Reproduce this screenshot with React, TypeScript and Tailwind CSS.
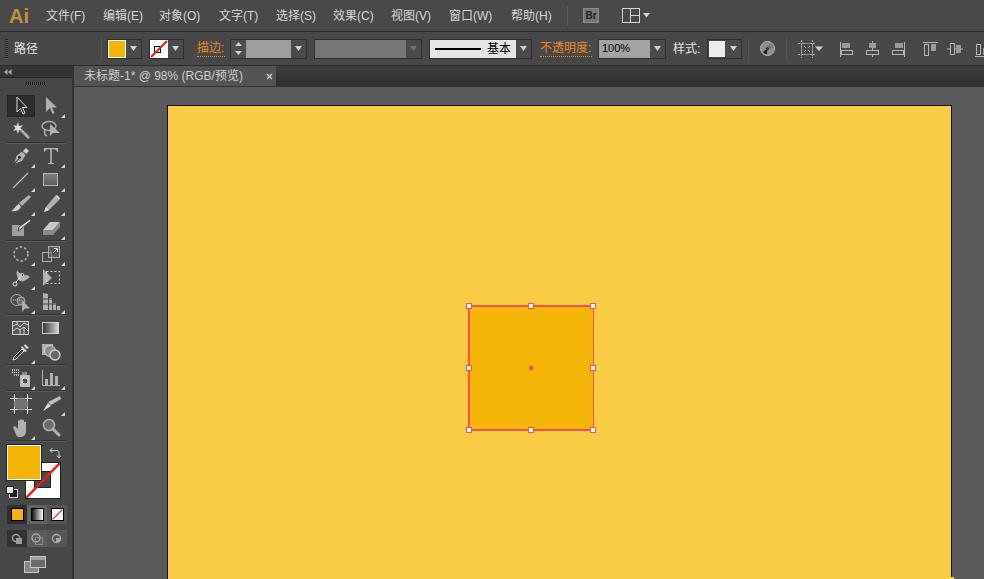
import React from "react";

const FONT = "font-['Liberation_Sans','Noto_Sans_CJK_SC',sans-serif]";

const menus = [
  ["文件(F)", "w-[57px]"],
  ["编辑(E)", "w-[56px]"],
  ["对象(O)", "w-[60px]"],
  ["文字(T)", "w-[57px]"],
  ["选择(S)", "w-[57px]"],
  ["效果(C)", "w-[58px]"],
  ["视图(V)", "w-[58px]"],
  ["窗口(W)", "w-[62px]"],
  ["帮助(H)", "w-[56px]"],
];

const Arrow = ({ dim = false }: { dim?: boolean }) => (
  <div className="w-[15px] h-full flex items-center justify-center bg-[#4a4a4a]">
    <svg width="7" height="5" viewBox="0 0 7 5">
      <path d="M0 0H7L3.5 5Z" fill={dim ? "#757575" : "#d0d0d0"} />
    </svg>
  </div>
);

const Box = ({ className = "", children }: { className?: string; children: React.ReactNode }) => (
  <div className={`h-[20px] flex border border-[#2e2e2e] bg-[#3c3c3c] ${className}`}>{children}</div>
);

const Sep = ({ className = "" }: { className?: string }) => <div className={`w-px h-[22px] bg-[#373737] border-r border-[#555] ${className}`} />;

const Label = ({ children, className = "" }: { children: React.ReactNode; className?: string }) => (
  <span className={`text-[12px] leading-[15px] whitespace-nowrap text-[#e8892b] border-b border-dotted border-[#e8892b] ${className}`}>{children}</span>
);

const NoneDiag = () => (
  <svg className="absolute inset-0 w-full h-full" viewBox="0 0 18 18" preserveAspectRatio="none">
    <line x1="1" y1="17" x2="17" y2="1" stroke="#ee1c25" strokeWidth="2" />
  </svg>
);

const AlignIcon = ({ children, className = "" }: { children: React.ReactNode; className?: string }) => (
  <svg width="16" height="16" viewBox="0 0 16 16" className={className} fill="none" stroke="#b5b5b5">
    {children}
  </svg>
);

const Tool = ({ children, corner = false, active = false }: { children: React.ReactNode; corner?: boolean; active?: boolean }) => (
  <div className={`relative flex items-center justify-center ${active ? "bg-[#2e2e2e] border border-[#262626] w-[28px] h-[22px] mx-px" : "w-[30px] h-[24px]"}`}>
    <svg width="22" height="22" viewBox="0 0 22 22">{children}</svg>
    {corner && (
      <svg className="absolute right-[1px] bottom-[0px]" width="4" height="4" viewBox="0 0 4 4">
        <path d="M4 0V4H0Z" fill="#d5d5d5" />
      </svg>
    )}
  </div>
);

const Row = ({ children }: { children: React.ReactNode }) => <div className="flex h-[24px] items-center pl-[6px]">{children}</div>;
const Divider = () => <div className="h-[2px] mx-[6px] bg-[#333] border-b border-[#5a5a5a]" />;

const G = "#b0b0b0";

export default function App() {
  return (
    <div className={`w-[984px] h-[579px] overflow-hidden flex flex-col bg-[#5a5a5a] ${FONT}`}>
      {/* Menu bar */}
      <div className="h-[32px] flex items-center bg-[#494949] border-b border-[#2b2b2b] shrink-0">
        <span className="w-[46px] pl-[9px] text-[#c4903f] text-[20px] font-bold leading-none font-['Liberation_Sans',sans-serif]">Ai</span>
        {menus.map(([t, w]) => (
          <span key={t} className={`${w} text-[12px] text-[#d6d6d6]`}>{t}</span>
        ))}
        <div className="w-px h-[20px] bg-[#333] border-r border-[#5d5d5d]" />
        <div className="ml-[15px] w-[16px] h-[15px] border border-[#8c8c8c] bg-[#767676] flex items-center justify-center text-[10px] font-bold text-[#222]">Br</div>
        <svg className="ml-[23px]" width="29" height="16" viewBox="0 0 29 16">
          <rect x="0.5" y="0.5" width="17" height="14" fill="#484848" stroke="#d5d5d5" />
          <path d="M8.5 1V14M9 7.5H17" stroke="#d5d5d5" fill="none" />
          <path d="M21 5H28L24.5 9.5Z" fill="#d5d5d5" />
        </svg>
      </div>

      {/* Control bar */}
      <div className="h-[34px] flex items-center bg-[#484848] border-b border-[#2b2b2b] shrink-0 [&>*]:shrink-0">
        <div className="ml-[5px] w-[3px] h-[20px] bg-[repeating-linear-gradient(#1f1f1f_0,#1f1f1f_1px,#5a5a5a_1px,#5a5a5a_2px)]" />
        <span className="ml-[6px] w-[87px] text-[12px] text-[#e4e4e4]">路径</span>
        <Sep />
        <Box className="ml-[5px] w-[35px]">
          <div className="w-[18px] h-full bg-[#f5b508] border border-white" />
          <Arrow />
        </Box>
        <Box className="ml-[7px] w-[35px]">
          <div className="relative w-[18px] h-full bg-white">
            <div className="absolute left-[4px] top-[6px] w-[7px] h-[7px] border border-black" />
            <NoneDiag />
          </div>
          <Arrow />
        </Box>
        <Label className="ml-[13px] w-[28px]">描边:</Label>
        <Box className="ml-[5px] w-[77px]">
          <div className="w-[15px] h-full bg-[#4f4f4f] flex flex-col items-center justify-around">
            <svg width="7" height="4" viewBox="0 0 7 4"><path d="M0 4H7L3.5 0Z" fill="#d0d0d0" /></svg>
            <svg width="7" height="4" viewBox="0 0 7 4"><path d="M0 0H7L3.5 4Z" fill="#d0d0d0" /></svg>
          </div>
          <div className="flex-1 bg-[#9e9e9e]" />
          <Arrow />
        </Box>
        <Box className="ml-[7px] w-[108px]">
          <div className="flex-1 bg-[#767676]" />
          <Arrow dim />
        </Box>
        <Box className="ml-[7px] w-[103px]">
          <div className="flex-1 bg-[#e6e6e6] flex items-center pl-[5px]">
            <div className="w-[46px] h-[2px] bg-black" />
            <span className="ml-[6px] text-[12px] leading-none text-black">基本</span>
          </div>
          <Arrow />
        </Box>
        <Label className="ml-[8px] w-[52px]">不透明度:</Label>
        <Box className="ml-[6px] w-[68px]">
          <div className="flex-1 bg-[#a3a3a3] pl-[3px] text-[11px] leading-[17px] text-black">100%</div>
          <Arrow />
        </Box>
        <span className="ml-[7px] w-[34px] whitespace-nowrap text-[12px] text-[#e4e4e4]">样式:</span>
        <Box className="w-[35px]">
          <div className="w-[18px] h-full bg-[#ececec] border border-[#4a4a4a]" />
          <Arrow />
        </Box>
        <Sep className="ml-[6px]" />
        <svg className="ml-[11px]" width="15" height="15" viewBox="0 0 15 15">
          <circle cx="7.5" cy="7.5" r="7" fill="#8e8e8e" stroke="#b5b5b5" />
          <path d="M7.5 7.5 L3 11 A6 6 0 0 0 7 13.5Z" fill="#1c1c1c" />
          <path d="M7.5 7.5 L10 2 A6 6 0 0 1 13.5 7Z" fill="#787878" />
          <circle cx="7.5" cy="7.5" r="1.6" fill="#2a2a2a" />
        </svg>
        <Sep className="ml-[11px]" />
        <svg className="ml-[10px]" width="26" height="20" viewBox="0 0 26 20" fill="none" stroke="#a8a8a8">
          <rect x="4.5" y="4.5" width="11" height="11" stroke="#8c8c8c" />
          <path d="M1 4.5H8M13 4.5H19M1 15.5H8M13 15.5H19M4.5 1V8M15.5 1V8M4.5 12V19M15.5 12V19" strokeDasharray="2 1" />
          <path d="M7 7l2 2M13 7l-2 2M7 13l2-2M13 13l-2-2" />
          <path d="M18 7.5H26L22 12Z" fill="#d0d0d0" stroke="none" />
        </svg>
        <AlignIcon className="ml-[16px]">
          <path d="M1.5 1V16" />
          <rect x="3" y="2" width="8" height="5" fill="#9a9a9a" stroke="none" />
          <rect x="2.5" y="9.5" width="11" height="4" />
        </AlignIcon>
        <AlignIcon className="ml-[10px]">
          <path d="M7.5 0V3M7.5 7V9.5M7.5 14V16" />
          <rect x="4" y="2" width="7" height="5" fill="#9a9a9a" stroke="none" />
          <rect x="1.5" y="9.5" width="12" height="4" />
        </AlignIcon>
        <AlignIcon className="ml-[10px]">
          <path d="M13.5 1V16" />
          <rect x="4" y="2" width="8" height="5" fill="#9a9a9a" stroke="none" />
          <rect x="1.5" y="9.5" width="11" height="4" />
        </AlignIcon>
        <AlignIcon className="ml-[16px]">
          <path d="M0 1.5H15" />
          <rect x="1.5" y="3.5" width="4" height="11" />
          <rect x="8" y="3" width="5" height="7" fill="#9a9a9a" stroke="none" />
        </AlignIcon>
        <AlignIcon className="ml-[8px]">
          <path d="M0 8H16" />
          <rect x="3.5" y="2.5" width="4" height="11" fill="#484848" />
          <rect x="9" y="4" width="5" height="8" fill="#9a9a9a" stroke="none" />
        </AlignIcon>
        <AlignIcon className="ml-[12px]">
          <path d="M0 15.5H15" />
          <rect x="1.5" y="3.5" width="4" height="10" />
          <rect x="8" y="7" width="5" height="7" fill="#9a9a9a" stroke="none" />
        </AlignIcon>
      </div>

      <div className="flex-1 flex min-h-0">
        {/* Tools panel */}
        <div className="w-[74px] shrink-0 flex flex-col bg-[#474747] border-r-2 border-[#333]">
          <div className="h-[12px] bg-[#343434] border-b border-[#262626] flex items-center pl-[4px]">
            <svg width="8" height="6" viewBox="0 0 8 6"><path d="M3.5 0V6L0 3ZM7.5 0V6L4 3Z" fill="#a8a8a8" /></svg>
          </div>
          <div className="h-[16px] flex items-start justify-center pt-[4px]">
            <div className="w-[20px] h-[3px] bg-[repeating-linear-gradient(90deg,#151515_0,#151515_1px,#5a5a5a_1px,#5a5a5a_2px)]" />
          </div>
          <div>
            <Row>
              <Tool active>
                <path d="M7 2V17L10.5 13.5L13 19L15 18L12.5 12.5H17Z" fill="#2e2e2e" stroke="#d8d8d8" />
              </Tool>
              <Tool corner>
                <path d="M6 2V17L10 13L12.5 19L14.5 18L12 12.5H17Z" fill={G} />
              </Tool>
            </Row>
            <Row>
              <Tool>
                <path d="M8 3L9 7L13 6L10.5 9L13 12L9 11L8 15L6.5 11L3 12L5.5 9L3 6L6.5 7Z" fill="#dcdcdc" />
                <path d="M11 11L19 19" stroke={G} strokeWidth="2.5" />
              </Tool>
              <Tool>
                <ellipse cx="9" cy="7" rx="7" ry="4.5" fill="none" stroke={G} strokeWidth="1.4" />
                <path d="M5 11C4 14 5 16 7 17" fill="none" stroke={G} strokeWidth="1.4" />
                <path d="M10 5V17L13 14H20Z" fill={G} />
              </Tool>
            </Row>
            <Divider />
            <Row>
              <Tool corner>
                <path d="M16 3L19 6L16 9L13 6Z" fill="#cfcfcf" />
                <path d="M12 6.5L15.5 10L12 16L4 19L6.5 11Z" fill={G} />
                <circle cx="9.5" cy="12.5" r="1.4" fill="#222" />
                <path d="M4 19L9 13.5" stroke="#222" />
              </Tool>
              <Tool corner>
                <path d="M4 3H18V7H17.3C16.8 5 15.5 4.2 14 4.2H11.8V17C11.8 17.8 12.5 18.2 14 18.2V19H8V18.2C9.5 18.2 10.2 17.8 10.2 17V4.2H8C6.5 4.2 5.2 5 4.7 7H4Z" fill="#b5b5b5" />
              </Tool>
            </Row>
            <Row>
              <Tool corner>
                <path d="M3 19L18 4" stroke="#c0c0c0" strokeWidth="1.1" />
              </Tool>
              <Tool corner>
                <defs>
                  <linearGradient id="rg" x1="0" y1="0" x2="0" y2="1">
                    <stop offset="0" stopColor="#808080" />
                    <stop offset="1" stopColor="#5c5c5c" />
                  </linearGradient>
                </defs>
                <rect x="3.5" y="4.5" width="14" height="12" fill="url(#rg)" stroke="#b5b5b5" />
              </Tool>
            </Row>
            <Row>
              <Tool corner>
                <path d="M19 2L21 4L12 13L9 10Z" fill={G} />
                <path d="M9 11L11 14C9 18 5 19 1 18C4 17 5 13 9 11Z" fill="#d2d2d2" />
              </Tool>
              <Tool corner>
                <path d="M15 3L19 7L9 17L4 19L6 14Z" fill={G} />
                <path d="M15 3L17 2L20 5L19 7Z" fill="#e0e0e0" />
                <path d="M4 19L6 14L9 17Z" fill="#dcdcdc" />
              </Tool>
            </Row>
            <Row>
              <Tool>
                <path d="M2 8H14V19H2Z" fill="#a0a0a0" />
                <path d="M20 2L21 4L11 12L8 14L9 10Z" fill="#d8d8d8" stroke="#474747" />
              </Tool>
              <Tool corner>
                <path d="M10 5H20L13 13H3Z" fill="#c8c8c8" />
                <path d="M3 13H13V18H3ZM13 13L20 5V10L13 18Z" fill="#8a8a8a" />
              </Tool>
            </Row>
            <Divider />
            <Row>
              <Tool corner>
                <circle cx="11" cy="11" r="7" fill="none" stroke={G} strokeWidth="1.6" strokeDasharray="2.5 2" />
              </Tool>
              <Tool corner>
                <rect x="2.5" y="9.5" width="9" height="9" fill="none" stroke={G} />
                <rect x="8.5" y="3.5" width="11" height="11" fill="#6a6a6a" fillOpacity="0.5" stroke={G} />
                <path d="M13 10L17 6M14 5.5H17.5V9" fill="none" stroke="#e0e0e0" />
              </Tool>
            </Row>
            <Row>
              <Tool corner>
                <path d="M7 3C8 6 12 6 14 9C16 7 18 8 20 10C18 11 17 13 14 14C12 15 9 14 8 12C7 9 6 7 7 3Z" fill={G} />
                <circle cx="5" cy="17" r="2" fill="none" stroke="#e0e0e0" />
                <path d="M6 15L12 8" stroke="#e0e0e0" />
                <circle cx="12.5" cy="8" r="1.5" fill="#222" stroke="#ddd" />
              </Tool>
              <Tool>
                <path d="M3 2V19L12 11Z" fill={G} />
                <rect x="6.5" y="4.5" width="13" height="12" fill="none" stroke="#e0e0e0" strokeDasharray="2 2" />
              </Tool>
            </Row>
            <Row>
              <Tool corner>
                <ellipse cx="7" cy="9" rx="6" ry="5.5" fill="none" stroke={G} />
                <circle cx="11" cy="10" r="4" fill="#6a6a6a" stroke={G} />
                <path d="M3 9H11" stroke="#ddd" strokeDasharray="1 1" />
                <path d="M12 9V21L15 17.5H20Z" fill={G} />
              </Tool>
              <Tool corner>
                <path d="M3 2L8 3V19H3ZM9 7H12V19H9ZM13 12H16V19H13ZM17 15H20V19H17Z" fill={G} />
                <path d="M3 8H12M3 13H16" stroke="#474747" />
              </Tool>
            </Row>
            <Divider />
            <Row>
              <Tool>
                <rect x="2.5" y="4.5" width="16" height="13" fill="#585858" stroke="#d0d0d0" />
                <path d="M3 9L7 7L10 10L14 6L18 8M3 14L7 11L10 13L10 17M10 13L14 10L18 14M7 4V7M14 10V17" fill="none" stroke="#d0d0d0" />
              </Tool>
              <Tool>
                <defs>
                  <linearGradient id="gg" x1="0" x2="1" y1="0" y2="0">
                    <stop offset="0" stopColor="#333" />
                    <stop offset="1" stopColor="#d5d5d5" />
                  </linearGradient>
                </defs>
                <rect x="2.5" y="5.5" width="16" height="11" fill="url(#gg)" stroke="#cfcfcf" />
              </Tool>
            </Row>
            <Row>
              <Tool corner>
                <path d="M15 3L19 7L17 8L14 5Z" fill="#d8d8d8" />
                <path d="M12 5L17 10L15 11L11 7Z" fill="#d0d0d0" />
                <path d="M12 8L14 10L6 18L3 19L4 16Z" fill="#333" stroke="#d8d8d8" />
              </Tool>
              <Tool>
                <rect x="2" y="3" width="11" height="11" fill="#b0b0b0" />
                <circle cx="10" cy="10" r="5.5" fill="#8c8c8c" stroke="#cfcfcf" />
                <circle cx="15" cy="14" r="5" fill="#6a6a6a" stroke="#cfcfcf" strokeWidth="1.4" />
              </Tool>
            </Row>
            <Divider />
            <Row>
              <Tool corner>
                <rect x="10" y="8" width="10" height="12" rx="1" fill="#bdbdbd" />
                <rect x="12" y="5" width="5" height="3" fill="#8c8c8c" />
                <circle cx="15" cy="14" r="3" fill="#4a4a4a" stroke="#ddd" />
                <path d="M2 3H9M2 5.5H9M4 8H10" stroke="#ddd" strokeDasharray="1 1" strokeWidth="1.4" />
              </Tool>
              <Tool corner>
                <path d="M2.5 3V18.5H20" fill="none" stroke={G} />
                <path d="M5 12H8V18H5ZM10 6H13V18H10ZM15 9H18V18H15Z" fill={G} />
              </Tool>
            </Row>
            <Divider />
            <Row>
              <Tool>
                <rect x="4.5" y="5.5" width="13" height="11" fill="#717171" stroke="#9a9a9a" />
                <path d="M0 5.5H7M15 5.5H22M0 16.5H7M15 16.5H22M4.5 1V8M17.5 1V8M4.5 14V21M17.5 14V21" stroke="#e0e0e0" fill="none" />
              </Tool>
              <Tool corner>
                <path d="M20 3L21 6L11 12L8 9Z" fill="#bdbdbd" />
                <path d="M8 10L11 13L3 18Z" fill="#dcdcdc" />
              </Tool>
            </Row>
            <Row>
              <Tool corner>
                <path d="M3 10L5 9L8 12V4C8 3 10 3 10 4V9V3C10 2 12 2 12 3V9V3.5C12 2.5 14 2.5 14 3.5V10V5.5C14 4.5 16 4.5 16 5.5V14C16 17 14 20 11 20H9C7 20 6 18 5 15Z" fill={G} />
              </Tool>
              <Tool>
                <circle cx="9" cy="8" r="5.5" fill="#6c6c6c" stroke={G} strokeWidth="1.6" />
                <path d="M13 12L19 18" stroke={G} strokeWidth="3" strokeLinecap="round" />
              </Tool>
            </Row>
            <Divider />
          </div>

          {/* Fill / stroke */}
          <div className="relative h-[54px] mt-[3px] ml-[7px]">
            <div className="absolute left-[18px] top-[17px] w-[36px] h-[37px] bg-white border border-[#222]">
              <div className="absolute left-[8px] top-[8px] w-[17px] h-[17px] bg-[#474747] border border-[#222]" />
              <svg className="absolute inset-0 w-full h-full" viewBox="0 0 34 35"><line x1="0" y1="35" x2="34" y2="0" stroke="#ee1c25" strokeWidth="2.5" /></svg>
            </div>
            <div className="absolute left-0 top-0 w-[34px] h-[35px] bg-[#f5b508] border border-white outline outline-[#222]" />
            <svg className="absolute left-[42px] top-[2px]" width="12" height="12" viewBox="0 0 12 12" fill="none" stroke="#d0d0d0">
              <path d="M1 3.5H8C9.5 3.5 10 4.5 10 6V11" />
              <path d="M3.5 1L1 3.5L3.5 6M8 8.5L10 11L12 8.5" />
            </svg>
            <svg className="absolute left-[-1px] top-[41px]" width="12" height="12" viewBox="0 0 12 12">
              <rect x="3.5" y="3.5" width="8" height="8" fill="#222" stroke="#ccc" />
              <rect x="0.5" y="0.5" width="7" height="7" fill="#eee" stroke="#222" />
            </svg>
          </div>

          <div className="mt-[6px] ml-[7px] w-[60px] h-[19px] flex bg-[#2f2f2f]">
            <div className="w-[20px] flex items-center justify-center bg-[#2f2f2f]"><div className="w-[13px] h-[13px] bg-[#f5b508] border border-black" /></div>
            <div className="w-[20px] flex items-center justify-center bg-[#636363]"><div className="w-[13px] h-[13px] border border-black bg-[linear-gradient(90deg,#111,#fff)]" /></div>
            <div className="w-[20px] flex items-center justify-center bg-[#555]">
              <div className="relative w-[13px] h-[13px] border border-black bg-white"><NoneDiag /></div>
            </div>
          </div>

          <div className="mt-[6px] ml-[7px] w-[60px] h-[17px] flex">
            <div className="w-[20px] bg-[#323232] flex items-center justify-center">
              <svg width="12" height="12" viewBox="0 0 12 12"><circle cx="5" cy="5" r="3.5" fill="none" stroke="#9a9a9a" strokeWidth="1.5" /><rect x="5" y="5" width="6" height="6" fill="#9a9a9a" /></svg>
            </div>
            <div className="w-[20px] bg-[#5c5c5c] flex items-center justify-center">
              <svg width="12" height="12" viewBox="0 0 12 12"><circle cx="5" cy="5" r="4" fill="none" stroke="#a8a8a8" strokeWidth="1.5" /><rect x="4.5" y="4.5" width="7" height="7" fill="none" stroke="#8a8a8a" /></svg>
            </div>
            <div className="w-[20px] bg-[#555] flex items-center justify-center">
              <svg width="12" height="12" viewBox="0 0 12 12"><circle cx="5.5" cy="5.5" r="4" fill="none" stroke="#a8a8a8" strokeWidth="1.5" /><rect x="5" y="5" width="4" height="4" fill="#a8a8a8" /></svg>
            </div>
          </div>

          <svg className="mt-[9px] ml-[24px] shrink-0" width="22" height="17" viewBox="0 0 22 17">
            <rect x="0.5" y="5.5" width="14" height="11" fill="#888" stroke="#c8c8c8" />
            <rect x="6.5" y="0.5" width="15" height="11" fill="#6a6a6a" stroke="#c8c8c8" />
            <rect x="7" y="1" width="14" height="3" fill="#a0a0a0" />
          </svg>
        </div>

        {/* Document area */}
        <div className="flex-1 min-w-0 flex flex-col">
          <div className="h-[21px] shrink-0 bg-[linear-gradient(#3d3d3d,#2f2f2f)] border-b border-[#333]">
            <div className="w-[202px] h-[20px] bg-[#535353] flex items-center pl-[10px] text-[12px] text-[#cfcfcf] whitespace-nowrap">
              <span className="w-[182px]">未标题-1* @ 98% (RGB/预览)</span>
              <svg width="7" height="7" viewBox="0 0 7 7"><path d="M1 1L6 6M6 1L1 6" stroke="#d0d0d0" strokeWidth="1.3" /></svg>
            </div>
          </div>
          <div className="flex-1 min-h-0 bg-[#5a5a5a] pl-[93px] pt-[18px] overflow-hidden">
            <div className="relative w-[785px] h-[600px] bg-[#f9cc45] border-t border-x border-[#111]">
              <div className="absolute left-[783px] top-[471px] w-[3px] h-[3px] bg-[#f9cc45]" />
              {/* Selected path */}
              <div className="absolute left-[300px] top-[199px] w-[126px] h-[126px] bg-[#f5b508] border-l-2 border-t-2 border-b-2 border-r border-[#ff4f4f]">
                {[
                  "left-[-4px] top-[-4px]",
                  "left-[58px] top-[-4px]",
                  "right-[-3px] top-[-4px]",
                  "left-[-4px] top-[58px]",
                  "right-[-3px] top-[58px]",
                  "left-[-4px] bottom-[-4px]",
                  "left-[58px] bottom-[-4px]",
                  "right-[-3px] bottom-[-4px]",
                ].map((c) => (
                  <div key={c} className={`absolute ${c} w-[6px] h-[6px] bg-white border border-[#ff4f4f]`} />
                ))}
                <div className="absolute left-[59px] top-[59px] w-[4px] h-[4px] bg-[#ff4f4f]" />
              </div>
            </div>
          </div>
        </div>
      </div>
    </div>
  );
}
